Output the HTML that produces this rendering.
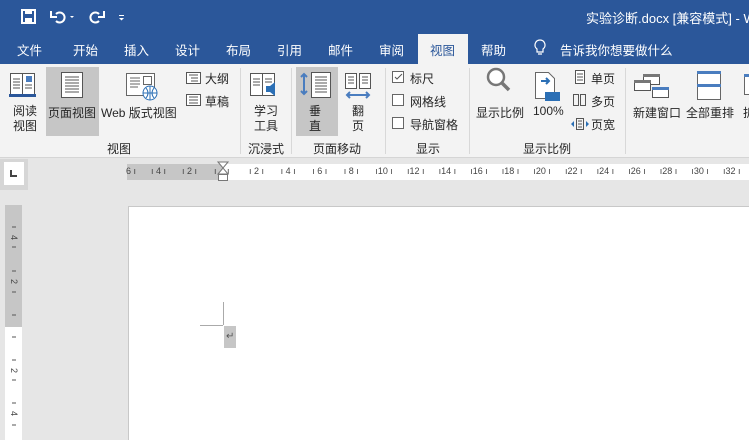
<!DOCTYPE html>
<html><head><meta charset="utf-8"><style>
*{margin:0;padding:0;box-sizing:border-box}
body{width:749px;height:440px;overflow:hidden;background:#e6e6e6;font-family:"Liberation Sans","Noto Sans CJK SC",sans-serif;font-size:12px;color:#262626;position:relative}
.a{position:absolute;white-space:nowrap}
.w{color:#fff}
.g{color:#444}
</style></head><body>
<div class="a" style="left:0;top:0;width:749px;height:64px;background:#2b579a"></div>
<svg class="a" style="left:20px;top:8px" width="120" height="18" viewBox="0 0 120 18">
<rect x="2" y="2" width="13" height="13" fill="none" stroke="#fff" stroke-width="2"/><rect x="5" y="2" width="7" height="4" fill="#fff"/><rect x="5" y="10" width="7" height="5" fill="#fff"/>
<path d="M36 6 A5 5 0 1 1 36 13" fill="none" stroke="#fff" stroke-width="2"/><path d="M31 3 L31 9 L37 9" fill="none" stroke="#fff" stroke-width="2"/>
<path d="M50 8 l4 0 l-2 2z" fill="#fff"/>
<path d="M79 6 A5 5 0 1 0 79 13" fill="none" stroke="#fff" stroke-width="2"/><path d="M84 3 L84 9 L78 9" fill="none" stroke="#fff" stroke-width="2"/>
<rect x="99" y="7" width="5" height="1" fill="#fff"/><path d="M99 10 l5 0 l-2.5 2.5z" fill="#fff"/>
</svg>
<div class="a w" style="left:586px;top:8px;font-size:13px">实验诊断.docx [兼容模式] - W</div>
<div class="a w" style="left:17px;top:40px;font-size:12.5px">文件</div>
<div class="a w" style="left:73px;top:40px;font-size:12.5px">开始</div>
<div class="a w" style="left:124px;top:40px;font-size:12.5px">插入</div>
<div class="a w" style="left:175px;top:40px;font-size:12.5px">设计</div>
<div class="a w" style="left:226px;top:40px;font-size:12.5px">布局</div>
<div class="a w" style="left:277px;top:40px;font-size:12.5px">引用</div>
<div class="a w" style="left:328px;top:40px;font-size:12.5px">邮件</div>
<div class="a w" style="left:379px;top:40px;font-size:12.5px">审阅</div>
<div class="a" style="left:418px;top:34px;width:50px;height:30px;background:#f3f3f3"></div>
<div class="a" style="left:430px;top:40px;font-size:12.5px;color:#2b579a">视图</div>
<div class="a w" style="left:481px;top:40px;font-size:12.5px">帮助</div>
<svg class="a" style="left:533px;top:39px" width="14" height="18"><path d="M7 1 a5 5 0 0 0 -3 9 v3 h6 v-3 a5 5 0 0 0 -3 -9z M5 15 h4" fill="none" stroke="#fff" stroke-width="1.2"/></svg>
<div class="a w" style="left:560px;top:40px;font-size:12.5px">告诉我你想要做什么</div>
<div class="a" style="left:0;top:64px;width:749px;height:94px;background:#f3f3f3;border-bottom:1px solid #d5d5d5"></div>
<div class="a" style="left:46px;top:67px;width:53px;height:69px;background:#c6c6c6"></div>
<div class="a" style="left:296px;top:67px;width:42px;height:69px;background:#c6c6c6"></div>
<svg class="a" style="left:0;top:64px" width="749" height="70">
<g fill="none" stroke="#555"><rect x="10.5" y="9.5" width="12" height="22" fill="#fff"/><rect x="22.5" y="9.5" width="12" height="22" fill="#fff"/><path d="M13 15h7M13 18h7M13 21h7M13 24h7M25 21h7M25 24h7"/><rect x="26" y="12" width="6" height="6" fill="#4a7dbf" stroke="none"/></g>
<rect x="9" y="30" width="27" height="3" fill="#2b579a"/>
<g fill="none" stroke="#555"><rect x="61.5" y="8.5" width="21" height="25" fill="#fff"/><path d="M65 13h14M65 16h14M65 19h14M65 22h14M65 25h14M65 28h14"/></g>
<g fill="none" stroke="#666"><rect x="126.5" y="9.5" width="28" height="22" fill="#fff"/><path d="M130 14h10M130 17h10M130 20h10M130 23h8"/><rect x="143.5" y="12.5" width="8" height="8"/></g>
<circle cx="150" cy="29" r="7" fill="#fff" stroke="#2b6fb5"/><path d="M143 29h14M150 22v14M146 24q4 5 0 10M154 24q-4 5 0 10" fill="none" stroke="#2b6fb5"/>
<g fill="none" stroke="#555"><rect x="186.5" y="8.5" width="14" height="11" fill="#fff"/><path d="M189 11h9M191 14h7M191 17h7"/><rect x="186.5" y="30.5" width="14" height="11" fill="#fff"/><path d="M189 33h9M189 36h9M189 39h9"/></g>
<g fill="none" stroke="#555"><rect x="250.5" y="9.5" width="12" height="22" fill="#fff"/><rect x="262.5" y="9.5" width="12" height="22" fill="#fff"/><path d="M253 15h7M253 18h7M253 21h7M265 15h7M265 18h7"/></g><path d="M266 22h4l5-4v14l-5-4h-4z" fill="#2b6fb5"/>
<g fill="none" stroke="#555"><rect x="311.5" y="8.5" width="19" height="25" fill="#fff"/><path d="M315 13h12M315 16h12M315 19h12M315 22h12M315 25h12M315 28h12"/></g><path d="M304 10v20M301 13l3-3 3 3M301 27l3 3 3-3" fill="none" stroke="#4a7dbf" stroke-width="2"/>
<g fill="none" stroke="#555"><rect x="345.5" y="9.5" width="11" height="15" fill="#fff"/><rect x="359.5" y="9.5" width="11" height="15" fill="#fff"/><path d="M348 13h6M348 16h6M348 19h6M362 13h6M362 16h6M362 19h6"/></g><path d="M347 31h22M350 28l-3 3 3 3M366 28l3 3-3 3" fill="none" stroke="#4a7dbf" stroke-width="2"/>
<rect x="392.5" y="7.5" width="11" height="11" fill="#fff" stroke="#666"/><path d="M395 13l2 2 5-5" fill="none" stroke="#555"/>
<rect x="392.5" y="30.5" width="11" height="11" fill="#fff" stroke="#666"/>
<rect x="392.5" y="53.5" width="11" height="11" fill="#fff" stroke="#666"/>
<circle cx="496" cy="13" r="8" fill="#fff" stroke="#777" stroke-width="2.5"/><path d="M502 19l7 7" stroke="#777" stroke-width="3.5"/>
<path d="M535.5 8.5h13l6 6v20h-19z" fill="#fff" stroke="#666"/><path d="M541 17h8M546 14l3 3-3 3" fill="none" stroke="#2b6fb5" stroke-width="2"/><rect x="545" y="28" width="15" height="9" fill="#2b6fb5"/>
<g fill="none" stroke="#555"><rect x="575.5" y="6.5" width="9" height="13" fill="#fff"/><path d="M577 10h6M577 13h6M577 16h6"/><rect x="573.5" y="30.5" width="5" height="11"/><rect x="580.5" y="30.5" width="5" height="11"/></g>
<g fill="none" stroke="#555"><rect x="643.5" y="10.5" width="16" height="10" fill="#fff"/><rect x="634.5" y="16.5" width="16" height="10" fill="#fff"/><rect x="652.5" y="23.5" width="16" height="10" fill="#fff"/></g><rect x="643" y="10" width="17" height="3" fill="#777"/><rect x="634" y="16" width="17" height="3" fill="#777"/><rect x="652" y="23" width="17" height="3" fill="#4a7dbf"/>
<rect x="697.5" y="7.5" width="23" height="28" fill="#fff" stroke="#666"/><rect x="697" y="7" width="24" height="3" fill="#4a7dbf"/><rect x="697" y="20" width="24" height="3" fill="#4a7dbf"/>
<rect x="744.5" y="10.5" width="10" height="20" fill="#fff" stroke="#666"/><rect x="744" y="10" width="10" height="3" fill="#4a7dbf"/>
</svg>
<svg class="a" style="left:570px;top:117px" width="20" height="14"><path d="M6.5 1.5h7v11h-7z M8 4h4M8 7h4M8 10h4" fill="none" stroke="#555"/><path d="M1 7l3-3v6zM19 7l-3-3v6z" fill="#2b6fb5"/></svg>
<div class="a" style="left:205px;top:70px">大纲</div>
<div class="a" style="left:205px;top:93px">草稿</div>
<div class="a" style="left:13px;top:104px;line-height:15px">阅读<br>视图</div>
<div class="a" style="left:48px;top:104px">页面视图</div>
<div class="a" style="left:101px;top:104px">Web 版式视图</div>
<div class="a" style="left:254px;top:104px;line-height:15px">学习<br>工具</div>
<div class="a" style="left:309px;top:104px;line-height:15px">垂<br>直</div>
<div class="a" style="left:352px;top:104px;line-height:15px">翻<br>页</div>
<div class="a" style="left:410px;top:70px">标尺</div>
<div class="a" style="left:410px;top:93px">网格线</div>
<div class="a" style="left:410px;top:116px">导航窗格</div>
<div class="a" style="left:476px;top:104px">显示比例</div>
<div class="a" style="left:533px;top:104px">100%</div>
<div class="a" style="left:591px;top:70px">单页</div>
<div class="a" style="left:591px;top:93px">多页</div>
<div class="a" style="left:591px;top:116px">页宽</div>
<div class="a" style="left:633px;top:104px">新建窗口</div>
<div class="a" style="left:686px;top:104px">全部重排</div>
<div class="a" style="left:743px;top:104px">拆</div>
<div class="a" style="left:107px;top:140px">视图</div>
<div class="a" style="left:248px;top:140px">沉浸式</div>
<div class="a" style="left:313px;top:140px">页面移动</div>
<div class="a" style="left:416px;top:140px">显示</div>
<div class="a" style="left:523px;top:140px">显示比例</div>
<div class="a" style="left:240px;top:68px;width:1px;height:86px;background:#d8d8d8"></div>
<div class="a" style="left:291px;top:68px;width:1px;height:86px;background:#d8d8d8"></div>
<div class="a" style="left:385px;top:68px;width:1px;height:86px;background:#d8d8d8"></div>
<div class="a" style="left:469px;top:68px;width:1px;height:86px;background:#d8d8d8"></div>
<div class="a" style="left:625px;top:68px;width:1px;height:86px;background:#d8d8d8"></div>
<div class="a" style="left:0;top:159px;width:28px;height:31px;background:#d6d6d6"></div>
<div class="a" style="left:4px;top:162px;width:20px;height:23px;background:#fff"></div>
<svg class="a" style="left:9px;top:169px" width="10" height="10"><path d="M2 1v6h6" fill="none" stroke="#444" stroke-width="2"/></svg>
<div class="a" style="left:127px;top:164px;width:96px;height:16px;background:#c6c6c6"></div>
<div class="a" style="left:223px;top:164px;width:526px;height:16px;background:#fff"></div>
<div class="a g" style="left:0;top:166px;font-size:9px">
<span class="a" style="left:126px">6 ı</span><span class="a" style="left:151px">ı 4 ı</span><span class="a" style="left:182px">ı 2 ı</span><span class="a" style="left:214px">ı</span></div>
<div class="a g" id="r" style="left:227px;top:166px;font-size:9px"></div>
<svg class="a" style="left:217px;top:161px" width="12" height="27"><path d="M1 1h10l-5 6z M1 13h10l-5-6z" fill="#fff" stroke="#777"/><rect x="1.5" y="13.5" width="9" height="6" fill="#fff" stroke="#777"/></svg>
<div class="a" style="left:5px;top:205px;width:17px;height:122px;background:#c6c6c6"></div>
<div class="a" style="left:5px;top:327px;width:17px;height:113px;background:#fff"></div>
<svg class="a" style="left:5px;top:205px" width="17" height="235"><g stroke="#555"><path d="M7 22h4M7 42h4M7 66h4M7 87h4M7 110h4M7 132h4M7 155h4M7 175h4M7 198h4M7 220h4"/></g>
<g font-size="9" fill="#444" font-family="Liberation Sans"><text transform="translate(6,30) rotate(90)">4</text><text transform="translate(6,74) rotate(90)">2</text><text transform="translate(6,163) rotate(90)">2</text><text transform="translate(6,206) rotate(90)">4</text></g></svg>
<div class="a" style="left:128px;top:206px;width:621px;height:234px;background:#fff;border-left:1px solid #c8c8c8;border-top:1px solid #c8c8c8"></div>
<div class="a" style="left:223px;top:302px;width:1px;height:23px;background:#aaa"></div>
<div class="a" style="left:200px;top:325px;width:23px;height:1px;background:#aaa"></div>
<div class="a" style="left:224px;top:326px;width:12px;height:22px;background:#c6c6c6;font-size:10px;color:#555;padding:5px 0 0 2px">↵</div>
<script>
var s='';for(var i=2;i<=32;i+=2){s+='<span style="position:absolute;left:'+((i/2-1)*31.6+22)+'px">'+(i<10?'ı '+i+' ı':'ı'+i+' ı')+'</span>';}
s+='<span style="position:absolute;left:0">ı</span>';
document.getElementById('r').innerHTML=s;
</script>
</body></html>
